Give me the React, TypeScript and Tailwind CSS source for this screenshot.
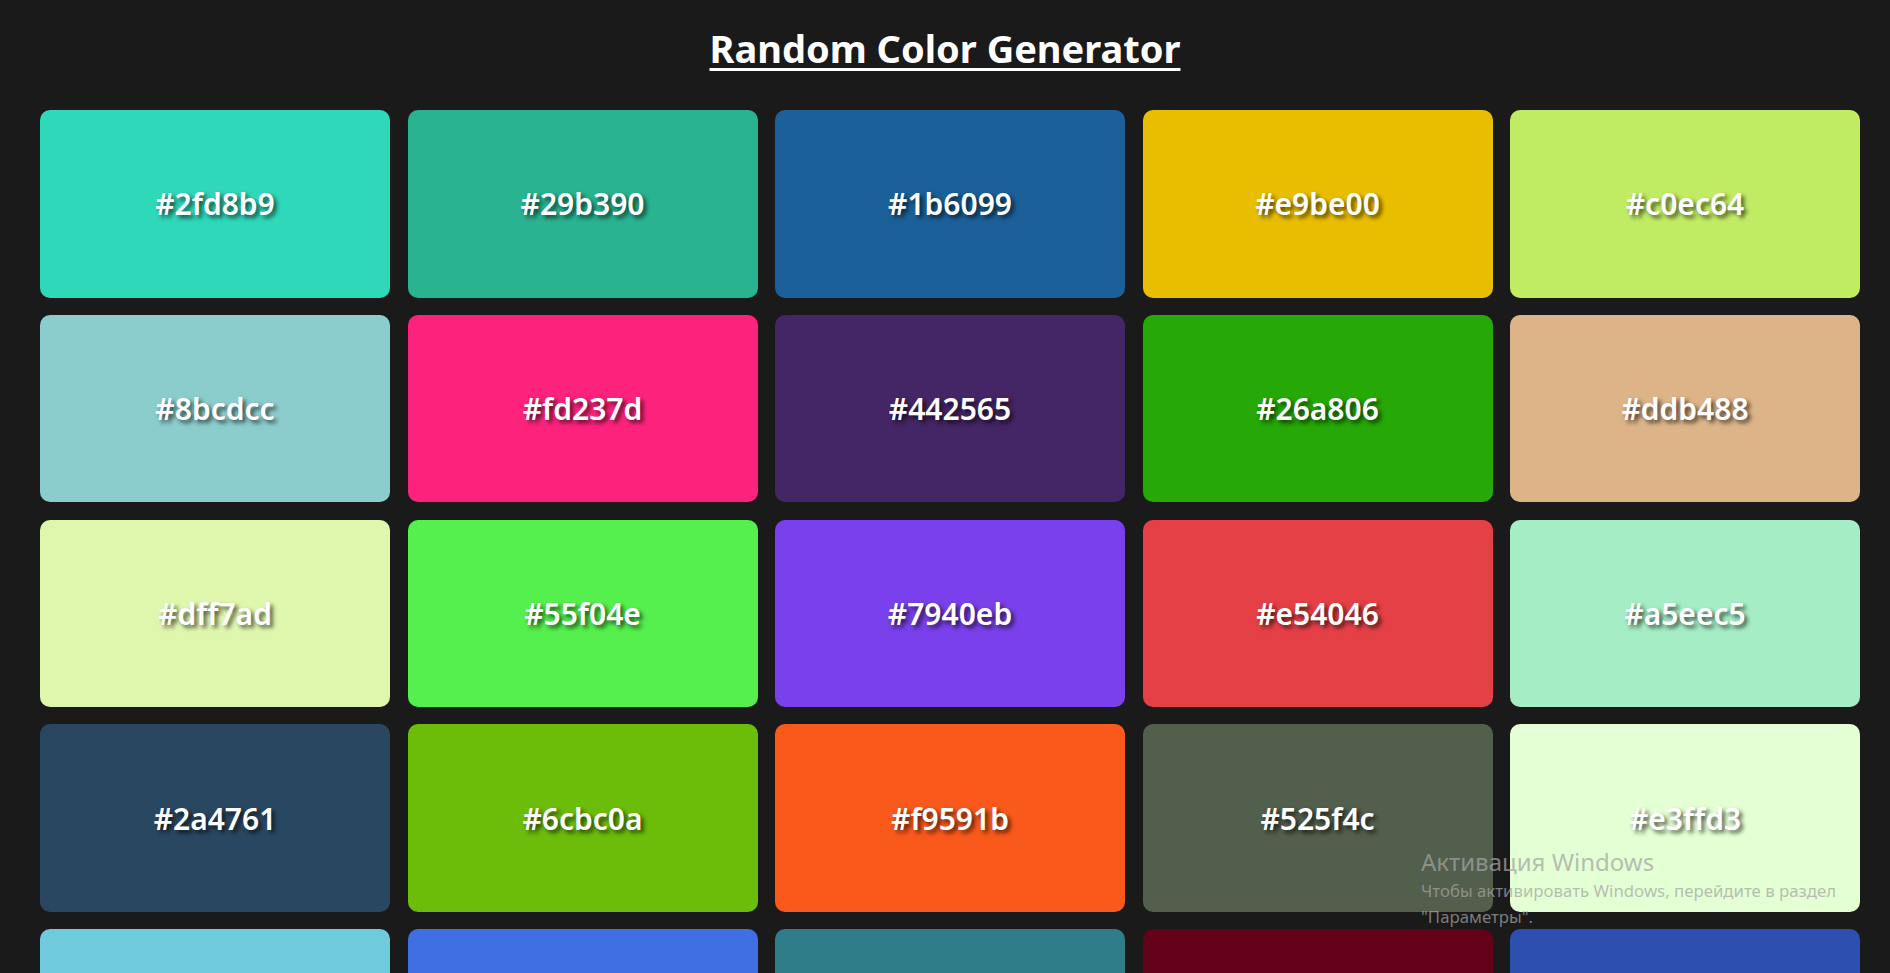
import React from "react";

const colors = [
  "#2fd8b9", "#29b390", "#1b6099", "#e9be00", "#c0ec64",
  "#8bcdcc", "#fd237d", "#442565", "#26a806", "#ddb488",
  "#dff7ad", "#55f04e", "#7940eb", "#e54046", "#a5eec5",
  "#2a4761", "#6cbc0a", "#f9591b", "#525f4c", "#e3ffd3",
  "#70cadd", "#3f6fe3", "#2f7d89", "#650019", "#2d4fb0",
];

export default function App() {
  return (
    <div className="relative min-h-screen w-full bg-[#1a1a1a] [font-family:'Comic_Sans_MS','Noto_Sans',sans-serif]">
      <div className="flex flex-col items-center pt-[25px]">
        <h1 className="text-[38px] font-bold leading-[46px] text-white underline decoration-[3px] underline-offset-[5px]">
          Random Color Generator
        </h1>
      </div>
      <div className="ml-[40px] mt-[39px] grid w-[1820px] grid-cols-5 gap-x-[17.5px] gap-y-[17.3px] pb-10">
        {colors.map((c) => (
          <div
            key={c}
            className="flex h-[187.5px] items-center justify-center rounded-[10px]"
            style={{ backgroundColor: c }}
          >
            <span className="text-[30px] font-semibold text-white [text-shadow:3px_3px_4px_rgba(0,0,0,0.65)]">
              {c}
            </span>
          </div>
        ))}
      </div>
      <div className="pointer-events-none absolute left-[1421px] top-[846px] [font-family:'Noto_Sans',sans-serif] text-[rgba(164,164,164,0.73)]">
        <div className="text-[24px] leading-[32px]">Активация Windows</div>
        <div className="text-[16.8px] leading-[26px]">Чтобы активировать Windows, перейдите в раздел</div>
        <div className="text-[16.8px] leading-[26px]">"Параметры".</div>
      </div>
    </div>
  );
}
